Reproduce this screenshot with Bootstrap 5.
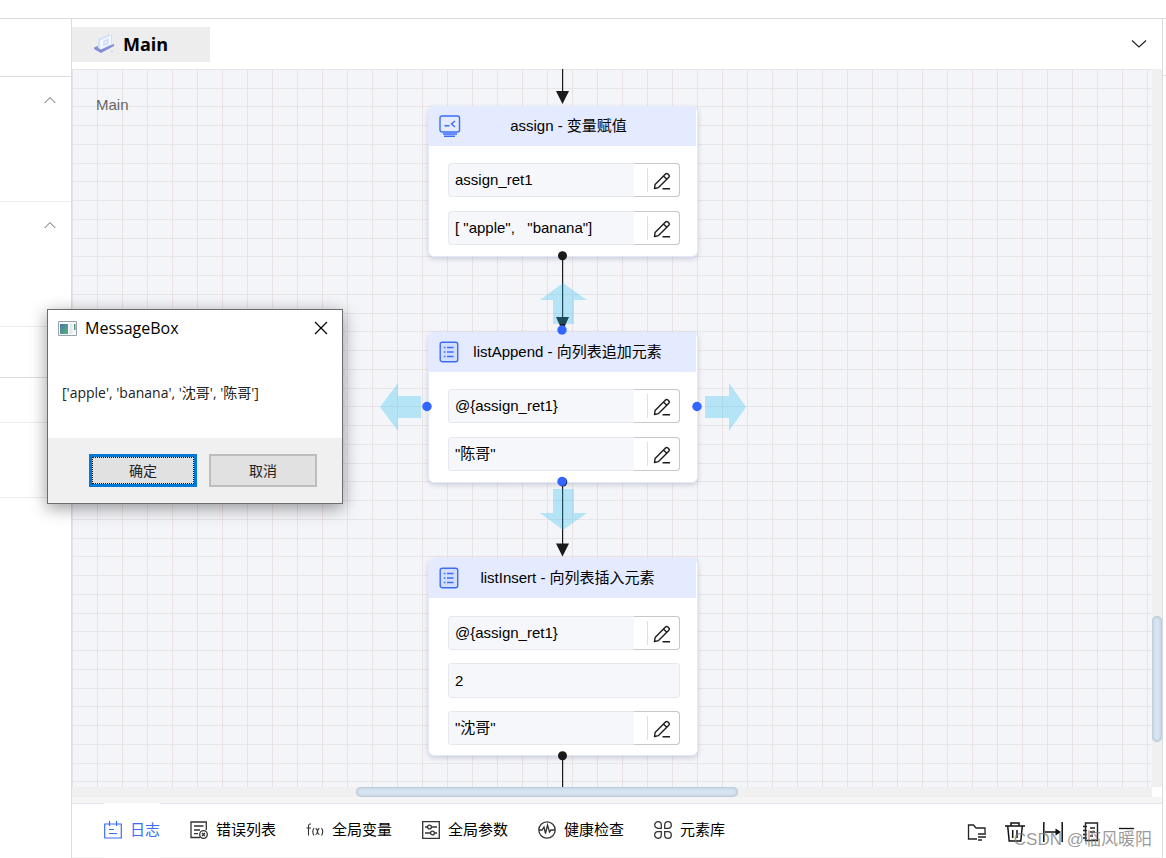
<!DOCTYPE html>
<html lang="zh-CN">
<head>
<meta charset="utf-8">
<meta name="viewport" content="width=device-width, initial-scale=1">
<title>Main</title>
<link href="https://cdn.jsdelivr.net/npm/bootstrap@5.3.0/dist/css/bootstrap.min.css" rel="stylesheet">
<style>
  :root { --rule: #dcdcde; --rule-light: #ebebf0; --blue: #3a6cf8; }
  body { font: 15px/20px "Liberation Sans", "Noto Sans CJK SC", sans-serif; color: #000; background: #fff; }
  svg { display: block; flex: none; }
  button { padding: 0; border: 0; background: none; color: inherit; }
  .top-strip { height: 19px; border-bottom: 1px solid var(--rule); }
  .side { width: 72px; border-right: 1px solid var(--rule); }
  .side section { border-bottom: 1px solid var(--rule-light); padding: 19px 15px 0 0; color: #666; }
  .side .strong-rule { border-color: var(--rule); }
  .h-head { height: 58px; } .h-tall { height: 125px; } .h-mid { height: 51px; } .h-short { height: 45px; } .h-last { height: 75px; }
  .edge-strip { width: 4px; border-left: 1px solid var(--rule); }
  .edge-strip div { height: 57px; border-bottom: 1px solid var(--rule); }
  .tabs-bar { height: 50px; padding: 8px 15px 7px 0; }
  .file-tab { width: 138px; height: 35px; padding: 0 0 2px 21px; gap: 8px; background: #ededed; font: bold 18px/24px "Open Sans", "Noto Sans", sans-serif; }
  .board {
    background-color: #f4f5f9;
    background-image:
      linear-gradient(90deg, #e9e2e5 1px, transparent 1px),
      linear-gradient(#e9e4e6 1px, transparent 1px 19px, #e9e4e6 19px 20px, transparent 20px 37px, #e9e4e6 37px 38px, transparent 38px 56px, #e9e4e6 56px 57px, transparent 57px);
    background-size: 25px 75px;
  }
  .board-name { padding: 26px 24px; color: #666; }
  .track { background: #f0f0f0; }
  .track-v { width: 10px; }
  .track-h { height: 10px; }
  .thumb { background: #d7e4f2; border-radius: 5px; box-shadow: inset 0 0 3px 1px #b3c1cf; }
  .track-v .thumb { height: 126px; width: 10px; }
  .track-h .thumb { width: 382px; height: 10px; }
  .under { height: 6px; background: #f5f5f5; }
  .node { width: 270px; left: 356px; border-radius: 6px; background: #fff; border: 1px solid #e4e9fa; border-top: 0; box-shadow: 0 2px 5px rgba(80,90,120,.25); }
  .node-head { height: 40px; margin-right: 1px; padding: 0 20px 0 10px; background: #e4eaff; border-radius: 6px 0 0 0; color: var(--blue); }
  .node-title { color: #000; }
  .node-body { padding: 17px 17px 11px 19px; gap: 14px; }
  .node-body.tight { padding: 18px 17px 10px 19px; gap: 13px; }
  .field { height: 34px; border: 1px solid #e6e8ee; border-radius: 3px; background: #f6f7fb; }
  .field.plain { height: 35px; }
  .field input { min-width: 0; padding: 0 0 0 6px; border: 0; background: none; color: #000; outline: 0; }
  .field button { width: 49px; margin: -1px; padding: 0 8px 0 13px; background: #fff; border: 1px solid #c8c8cb; border-left: 0; border-radius: 0 4px 4px 0; }
  .field button span { width: 1px; height: 24px; background: #dcdfe6; }
  .field button svg { margin-top: 1px; }
  .bottom-bar { height: 55px; padding: 0 25px 0 32px; border-top: 1px solid #e4e7ef; border-bottom: 1px solid #f3f3f3; }
  .panel-tabs { gap: 30px; }
  .panel-tabs button { gap: 8px; padding-bottom: 2px; white-space: nowrap; }
  .panel-tabs .active { color: var(--blue); background: #fff; margin: -1px 0; }
  .tools { gap: 18px; padding-top: 3px; }
  .watermark { right: 14px; bottom: 6px; font-size: 17px; line-height: 24px; color: rgba(120,120,120,.75); pointer-events: none; }
  .msg { left: 47px; top: 309px; width: 296px; background: #fff; border: 1px solid #6d6d6d; box-shadow: 0 4px 16px rgba(0,0,0,.4); font: 14px/20px "Open Sans", "Noto Sans CJK SC", sans-serif; }
  .msg-head { height: 36px; padding: 0 14px 0 10px; font-size: 16px; }
  .msg-text { height: 92px; padding: 37px 14px 0; font-size: 14px; color: #222; margin: 0; }
  .msg-foot { height: 65px; padding: 16px 25px; gap: 12px; background: #f0f0f0; color: #222; }
  .msg-foot button { width: 108px; background: #e1e1e1; border: 2px solid #bdbdbd; }
  .msg-foot .primary { border: 3px solid #0078d7; outline: 1px dotted #111; outline-offset: -4px; }
</style>
</head>
<body>
<svg width="0" height="0" class="position-absolute" aria-hidden="true">
  <symbol id="pen" viewBox="0 0 18 18"><g fill="none" stroke="#1c1c1c" stroke-width="1.4" stroke-linejoin="round"><path d="M1.500 16.500l.6-4L12.500 2a1.700 1.700 0 0 1 2.400 0l.9.9a1.700 1.700 0 0 1 0 2.400L5.500 15.600zM10.500 4l3.300 3.300M9.500 16.700h7.500"/></g></symbol>
  <symbol id="list" viewBox="0 0 20 22"><rect x="1.200" y="1.200" width="17.500" height="19.500" rx="2" fill="#d3deff"/><g fill="none" stroke="currentColor" stroke-width="1.4"><rect x="1.200" y="1.200" width="17.500" height="19.500" rx="2"/><path d="M8 6.500h6.500M8 11h6.500M8 15.500h6.500M4.800 6.500h1.600M4.800 11h1.600M4.800 15.500h1.600"/></g></symbol>
  <symbol id="up" viewBox="0 0 12 8"><path d="M.7 7L6 1.500 11.300 7" fill="none" stroke="currentColor"/></symbol>
</svg>

<div class="d-flex flex-column vh-100 overflow-hidden position-relative">
  <div class="top-strip flex-shrink-0"></div>
  <div class="d-flex flex-fill overflow-hidden">
    <aside class="side flex-shrink-0">
      <section class="h-head strong-rule"></section>
      <section class="h-tall"><button class="d-block ms-auto" aria-label="收起"><svg width="12" height="8"><use href="#up"/></svg></button></section>
      <section class="h-tall"><button class="d-block ms-auto" aria-label="收起"><svg width="12" height="8"><use href="#up"/></svg></button></section>
      <section class="h-mid strong-rule"></section>
      <section class="h-short"></section>
      <section class="h-last"></section>
    </aside>

    <main class="d-flex flex-column flex-fill overflow-hidden">
      <div class="tabs-bar d-flex justify-content-between align-items-center flex-shrink-0">
        <button class="file-tab d-flex align-items-center">
          <svg width="22" height="22" viewBox="0 0 22 22"><path d="M1 14.500l5-2 9 .5 6-2v2L8 20l-7-4z" fill="#8590d4"/><path d="M5 6l11-5 3 1.500v9L8 16.500 5 15z" fill="#d6e2fb"/><path d="M8 7l10-4.500v8.500L8 16z" fill="#f4f8ff"/><path d="M11 8.500l4-2v3.500l-4 2z" fill="none" stroke="#ccdafb" stroke-width="1.500"/><path d="M8 7v9" stroke="#fff"/><path d="M18 18.500h2" stroke="#c5c9e8"/><path d="M20 .7h1" stroke="#f3d3b0"/></svg>
          <span>Main</span>
        </button>
        <button aria-label="展开"><svg width="16" height="12" viewBox="0 0 16 12"><path d="M1 1.500l7 6.500 7-6.500" fill="none" stroke="#222" stroke-width="1.200"/></svg></button>
      </div>

      <div class="d-flex flex-fill overflow-hidden">
        <div class="board flex-fill position-relative overflow-hidden">
          <div class="board-name">Main</div>

          <div class="node position-absolute" style="top:37px">
            <div class="node-head d-flex align-items-center">
              <svg width="22" height="22" viewBox="0 0 22 22" fill="none" stroke="currentColor" stroke-width="1.400"><rect x="1" y="1" width="19.500" height="16" rx="2"/><path d="M5.500 10.700h5M16 6l-3.500 3 3.500 3M4 19h14M5 21.200h11"/></svg>
              <div class="node-title flex-fill text-center">assign - 变量赋值</div>
            </div>
            <div class="node-body d-flex flex-column">
              <div class="field d-flex"><input class="flex-fill" aria-label="变量名" value="assign_ret1"><button class="d-flex align-items-center justify-content-between" aria-label="编辑"><span></span><svg width="18" height="18"><use href="#pen"/></svg></button></div>
              <div class="field d-flex"><input class="flex-fill" aria-label="变量值" value="[ &quot;apple&quot;,&nbsp;&nbsp; &quot;banana&quot;]"><button class="d-flex align-items-center justify-content-between" aria-label="编辑"><span></span><svg width="18" height="18"><use href="#pen"/></svg></button></div>
            </div>
          </div>

          <div class="node position-absolute" style="top:263px">
            <div class="node-head d-flex align-items-center">
              <svg width="20" height="22"><use href="#list"/></svg>
              <div class="node-title flex-fill text-center">listAppend - 向列表追加元素</div>
            </div>
            <div class="node-body d-flex flex-column">
              <div class="field d-flex"><input class="flex-fill" aria-label="列表" value="@{assign_ret1}"><button class="d-flex align-items-center justify-content-between" aria-label="编辑"><span></span><svg width="18" height="18"><use href="#pen"/></svg></button></div>
              <div class="field d-flex"><input class="flex-fill" aria-label="元素" value="&quot;陈哥&quot;"><button class="d-flex align-items-center justify-content-between" aria-label="编辑"><span></span><svg width="18" height="18"><use href="#pen"/></svg></button></div>
            </div>
          </div>

          <div class="node position-absolute" style="top:489px">
            <div class="node-head d-flex align-items-center">
              <svg width="20" height="22"><use href="#list"/></svg>
              <div class="node-title flex-fill text-center">listInsert - 向列表插入元素</div>
            </div>
            <div class="node-body tight d-flex flex-column">
              <div class="field d-flex"><input class="flex-fill" aria-label="列表" value="@{assign_ret1}"><button class="d-flex align-items-center justify-content-between" aria-label="编辑"><span></span><svg width="18" height="18"><use href="#pen"/></svg></button></div>
              <div class="field plain d-flex"><input class="flex-fill" aria-label="位置" value="2"></div>
              <div class="field d-flex"><input class="flex-fill" aria-label="元素" value="&quot;沈哥&quot;"><button class="d-flex align-items-center justify-content-between" aria-label="编辑"><span></span><svg width="18" height="18"><use href="#pen"/></svg></button></div>
            </div>
          </div>

          <!-- connectors, ports and direction arrows -->
          <svg class="position-absolute top-0 start-0 w-100 h-100 pe-none" aria-hidden="true">
            <g fill="#1a1a1a" stroke="none">
              <path d="M490 0h1.200v24H490zM490 187h1.200v62H490zM490 413h1.200v62H490zM490 687h1.200v200H490z"/>
              <path d="M484 22h13l-6.500 13zM484 248h13l-5 11h-3zM484 474.500h13l-6.500 13z"/>
              <circle cx="490.500" cy="186.700" r="4.500"/><circle cx="490.800" cy="413" r="4.500"/><circle cx="490.500" cy="686.700" r="4.500"/>
            </g>
            <g fill="rgba(41,192,240,.31)">
              <path d="M491 214l24 17h-13v24h-21v-24h-13z"/>
              <path d="M491 461l24-17h-13v-24h-21v24h-13z"/>
              <path d="M308 338l18-24v13h23v22h-23v13z"/>
              <path d="M674 338l-17-24v13h-24v22h24v13z"/>
            </g>
            <g fill="#3366ff"><circle cx="490" cy="261" r="4.700"/><circle cx="490" cy="412.500" r="4.700"/><circle cx="355" cy="337.500" r="4.700"/><circle cx="625" cy="337.500" r="4.700"/></g>
          </svg>
        </div>
        <div class="track track-v position-relative flex-shrink-0"><div class="thumb position-absolute" style="top:547px"></div></div>
      </div>
      <div class="d-flex flex-shrink-0">
        <div class="track track-h flex-fill position-relative"><div class="thumb position-absolute" style="left:284px"></div></div>
        <div class="track-v"></div>
      </div>
      <div class="under flex-shrink-0"></div>

      <div class="bottom-bar d-flex justify-content-between flex-shrink-0">
        <div class="panel-tabs d-flex">
          <button class="active d-flex align-items-center"><svg width="18" height="18" viewBox="0 0 18 18" fill="none" stroke="currentColor" stroke-width="1.200"><path d="M.7 3h16.600v14H.7zM5.500 0v5M12.500 0v5M5 8.500h5M5 12.500h8"/></svg>日志</button>
          <button class="d-flex align-items-center"><svg width="18" height="18" viewBox="0 0 18 18" fill="none" stroke="#333" stroke-width="1.300"><path d="M16.300 9V1H1v15.500h9M4 5h9.500M4 9h6M4 12.700h4"/><circle cx="13.500" cy="13.500" r="3.800"/><path d="M12 12l3 3M15 12l-3 3"/></svg>错误列表</button>
          <button class="d-flex align-items-center"><svg width="18" height="18" viewBox="0 0 18 18" fill="none" stroke="#333" stroke-width="1.100"><path d="M5 3H4Q2.500 3 2.500 5v9.500M.5 7H5M8 7q-2.500 3.500 0 7.500M9.500 7.500q1.500 0 2 3t2 3M13.500 7.500q-1.500 0-2 3t-2 3M15.500 7q2.500 3.500 0 7.500"/></svg>全局变量</button>
          <button class="d-flex align-items-center"><svg width="18" height="18" viewBox="0 0 18 18" fill="none" stroke="#333" stroke-width="1.300"><path d="M.7.7h16.600v16.600H.7zM3 6h2.500M9.500 6H15M3 12h5.500M12.500 12H15"/><circle cx="7.500" cy="6" r="1.900"/><circle cx="10.500" cy="12" r="1.900"/></svg>全局参数</button>
          <button class="d-flex align-items-center"><svg width="18" height="18" viewBox="0 0 18 18" fill="none" stroke="#333" stroke-width="1.300"><circle cx="9" cy="9" r="8.200"/><path d="M1 9h3l2-3 1.500 6.500L9.500 4l2 7L13 9h4"/></svg>健康检查</button>
          <button class="d-flex align-items-center"><svg width="18" height="18" viewBox="0 0 18 18" fill="none" stroke="#333" stroke-width="1.300"><path d="M7.300 7.300H4A3.300 3.300 0 1 1 7.300 4zM10.700 7.300V4A3.300 3.300 0 1 1 14 7.300zM7.300 10.700V14A3.300 3.300 0 1 1 4 10.700zM10.700 10.700H14A3.300 3.300 0 1 1 10.700 14z"/></svg>元素库</button>
        </div>
        <div class="tools d-flex align-items-center">
          <button aria-label="打开"><svg width="20" height="20" viewBox="0 0 20 20" fill="none" stroke="#222" stroke-width="1.300"><path d="M10 17H1.500V3h5l2.500 3h9v5M11 12h8M11 15h8M11 18h4"/></svg></button>
          <button aria-label="删除"><svg width="20" height="20" viewBox="0 0 20 20" fill="none" stroke="#111" stroke-width="1.500"><path d="M0 4h20M6 4V1h8v3M2.700 4l1.500 15h11.600L17.300 4M7.700 8v8M12 8v8"/></svg></button>
          <button aria-label="适应宽度"><svg width="20" height="20" viewBox="0 0 20 20" fill="none" stroke="#111" stroke-width="1.500"><path d="M.8 0v20M19.200 0v20M2 10h14"/><path d="M12.500 6.500L18 10l-5.500 3.500z" fill="#111" stroke="none"/></svg></button>
          <button aria-label="记录"><svg width="20" height="20" viewBox="0 0 20 20" fill="none" stroke="#222" stroke-width="1.400"><path d="M4.500 1h12v17.500h-12zM2 4.500h4M2 8.500h4M2 12.500h4M2 16h4M9 6h5M9 10h5M9 14h3"/></svg></button>
          <button aria-label="最小化"><svg width="18" height="20" viewBox="0 0 18 20"><path d="M0 6.500h15" stroke="#111" stroke-width="1.300"/></svg></button>
        </div>
      </div>
    </main>
    <div class="edge-strip flex-shrink-0"><div></div></div>
  </div>

  <div class="watermark position-absolute">CSDN @临风暖阳</div>

  <div class="msg position-absolute" role="dialog" aria-labelledby="msg-title">
    <div class="msg-head d-flex align-items-center">
      <svg width="19" height="15" viewBox="0 0 19 15"><defs><linearGradient id="pic" x2="1" y2="1"><stop stop-color="#4977a8"/><stop offset="1" stop-color="#55b27a"/></linearGradient></defs><path d="M.5.5h18v14H.5z" fill="#f7f8fa" stroke="#9aa3ad"/><path d="M2 3h8v10H2z" fill="url(#pic)"/><path d="M11.500 3h3v10h-3z" fill="#e4e8ec"/><path d="M16 3h1.500v6H16z" fill="#4a9a78"/></svg>
      <span id="msg-title" class="flex-fill ps-1 ms-1 text-nowrap">MessageBox</span>
      <button aria-label="关闭"><svg width="14" height="14" viewBox="0 0 14 14"><path d="M1 1l12 12M13 1L1 13" stroke="#000" stroke-width="1.200"/></svg></button>
    </div>
    <p class="msg-text">['apple', 'banana', '沈哥', '陈哥']</p>
    <div class="msg-foot d-flex justify-content-end">
      <button class="primary">确定</button>
      <button>取消</button>
    </div>
  </div>
</div>
<script src="https://cdn.jsdelivr.net/npm/bootstrap@5.3.0/dist/js/bootstrap.bundle.min.js"></script>
</body>
</html>
